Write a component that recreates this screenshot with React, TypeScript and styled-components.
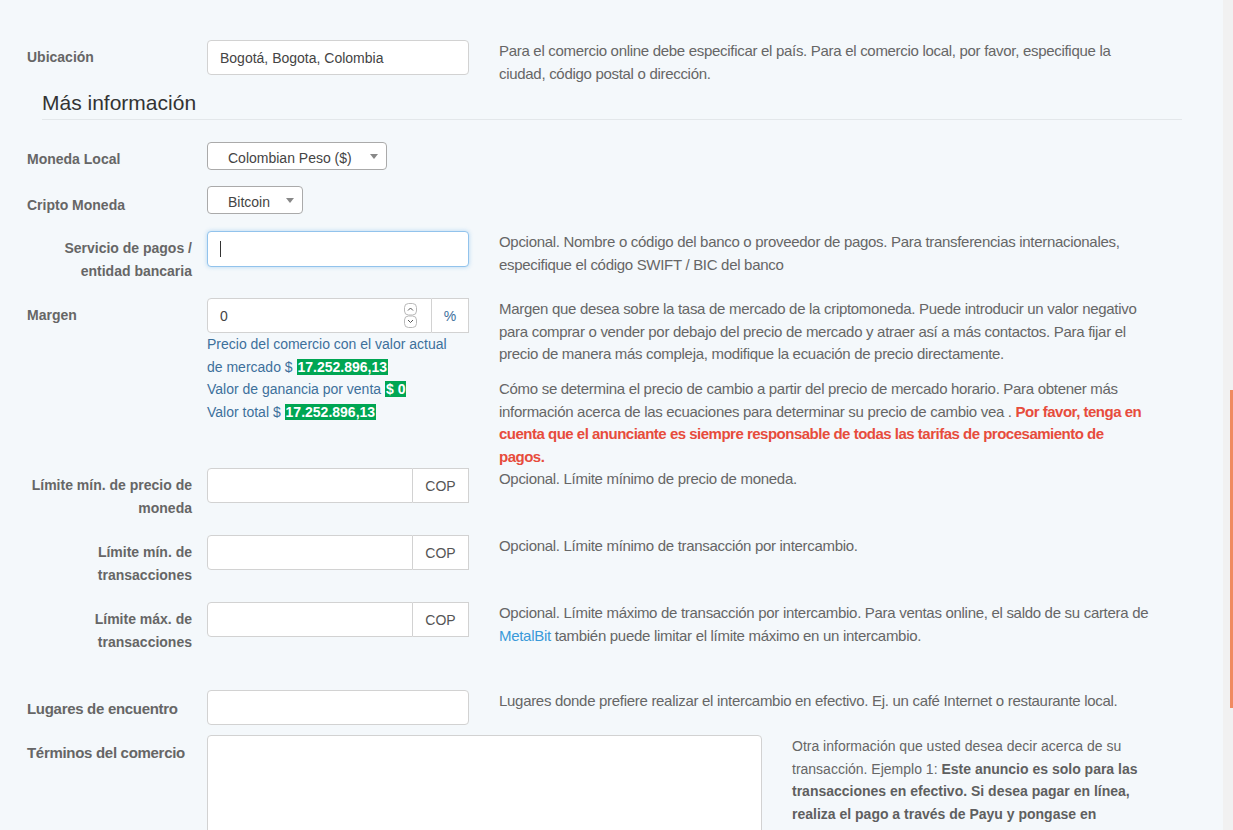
import React from "react";
import styled, { createGlobalStyle, css } from "styled-components";

const GlobalStyle = createGlobalStyle`
  html, body {
    margin: 0;
    padding: 0;
  }
  body {
    background: #f4f8fb;
    font-family: "Liberation Sans", Arial, sans-serif;
    font-size: 14px;
    color: #333;
  }
  * {
    box-sizing: border-box;
  }
`;

// the help texts are set a bit taller and tighter than the body copy
const narrow = css`
  font-size: 15px;
  letter-spacing: -0.3px;
`;

const Page = styled.div`
  display: flex;
  width: 1233px;
  height: 830px;
  overflow: hidden;
`;

const Main = styled.main`
  flex: 1;
  padding-top: 40px;
`;

const ScrollTrack = styled.div`
  width: 10px;
  background: #f1f1f1;
  display: flex;
  justify-content: flex-end;
`;

const ScrollThumb = styled.div`
  width: 3px;
  height: 318px;
  margin-top: 390px;
  background: #f08a60;
`;

const Row = styled.div<{ $mt?: number; $wide?: boolean }>`
  display: grid;
  grid-template-columns: ${(p) => (p.$wide ? "165px 555px 375px" : "165px 262px 667px")};
  column-gap: 15px;
  align-items: start;
  padding-left: 27px;
  margin-top: ${(p) => p.$mt ?? 15}px;
`;

const Label = styled.label<{ $right?: boolean; $narrow?: boolean; $pt?: number }>`
  padding-top: ${(p) => p.$pt ?? 6}px;
  font-weight: 700;
  line-height: 23px;
  color: #666;
  white-space: ${(p) => (p.$narrow ? "nowrap" : "normal")};
  text-align: ${(p) => (p.$right ? "right" : "left")};
  ${(p) => p.$narrow && narrow}
`;

const Help = styled.div<{ $narrow?: boolean }>`
  margin-left: 15px;
  color: #666;
  line-height: 22.5px;
  ${(p) => p.$narrow && narrow}

  p {
    margin: 0 0 12.5px;
  }
  p:last-child {
    margin-bottom: 0;
  }
  b {
    color: #5f5f5f;
  }
`;

const Warn = styled.b`
  color: #e74c3c !important;
  letter-spacing: -0.5px;
`;

const Link = styled.a`
  color: #3a9ad9;
  text-decoration: none;
`;

const SectionTitle = styled.h3`
  width: 1140px;
  margin: 6px 0 0 42px;
  padding-bottom: 5px;
  border-bottom: 1px solid #e3e7ea;
  font-size: 21px;
  font-weight: 400;
  line-height: 23px;
  color: #333;
`;

const TextInput = styled.input`
  display: block;
  width: 100%;
  height: 35px;
  padding: 0 12px;
  border: 1px solid #d2d2d2;
  border-radius: 4px;
  background: #fff;
  font-family: "Liberation Sans", Arial, sans-serif;
  font-size: 14px;
  color: #444;
  outline: none;
`;

const FocusField = styled.div`
  display: flex;
  align-items: center;
  height: 36px;
  padding: 0 12px;
  border: 1px solid #92c3ec;
  border-radius: 4px;
  background: #fff;
  box-shadow: 0 0 4px rgba(102, 175, 233, 0.45);
`;

const Caret = styled.span`
  width: 1px;
  height: 16px;
  background: #333;
`;

const Select = styled.div<{ $w: number }>`
  position: relative;
  width: ${(p) => p.$w}px;
  height: 28px;
  padding: 4px 0 0 20px;
  border: 1px solid #aaa;
  border-radius: 4px;
  background: #fff;
  line-height: 23px;
  color: #444;

  &::after {
    content: "";
    position: absolute;
    right: 8px;
    top: 11px;
    border-left: 4px solid transparent;
    border-right: 4px solid transparent;
    border-top: 5px solid #888;
  }
`;

const Group = styled.div`
  display: flex;
  height: 35px;
`;

const GroupField = styled.div`
  flex: 1;
  display: flex;
  align-items: center;
  padding: 0 14px 0 12px;
  border: 1px solid #d2d2d2;
  border-radius: 4px 0 0 4px;
  background: #fff;
  color: #444;
`;

const FieldValue = styled.span`
  flex: 1;
`;

const Addon = styled.div<{ $w: number; $blue?: boolean }>`
  width: ${(p) => p.$w}px;
  display: flex;
  align-items: center;
  justify-content: center;
  border: 1px solid #d2d2d2;
  border-left: none;
  background: #fff;
  color: ${(p) => (p.$blue ? "#3d6f9c" : "#555")};
`;

const Info = styled.div`
  width: 250px;
  color: #3d709b;
  line-height: 22.5px;
`;

const Badge = styled.span`
  background: #00a653;
  color: #fff;
  font-weight: 700;
  padding: 0 1px;
`;

const TextArea = styled.textarea`
  display: block;
  width: 100%;
  height: 150px;
  border: 1px solid #d2d2d2;
  border-radius: 4px;
  background: #fff;
  resize: none;
  outline: none;
`;

const Spinner = () => (
  <svg width="13" height="25" viewBox="0 0 13 25">
    <rect x="0.5" y="0.5" width="12" height="11.5" rx="4" fill="#fff" stroke="#b9b9b9" />
    <rect x="0.5" y="13" width="12" height="11.5" rx="4" fill="#fff" stroke="#b9b9b9" />
    <path d="M4 7.5 L6.5 5 L9 7.5" fill="none" stroke="#555" strokeWidth="1" />
    <path d="M4 17 L6.5 19.5 L9 17" fill="none" stroke="#555" strokeWidth="1" />
  </svg>
);

const CopGroup = () => (
  <Group>
    <GroupField />
    <Addon $w={56}>COP</Addon>
  </Group>
);

export default function App() {
  return (
    <>
      <GlobalStyle />
      <Page>
        <Main>
          <Row $mt={0}>
            <Label>Ubicación</Label>
            <TextInput defaultValue="Bogotá, Bogota, Colombia" />
            <Help $narrow>
              Para el comercio online debe especificar el país. Para el comercio local, por favor, especifique la
              ciudad, código postal o dirección.
            </Help>
          </Row>

          <SectionTitle>Más información</SectionTitle>

          <Row $mt={22}>
            <Label>Moneda Local</Label>
            <Select $w={180}>Colombian Peso ($)</Select>
          </Row>

          <Row $mt={15}>
            <Label $pt={8}>Cripto Moneda</Label>
            <Select $w={96}>Bitcoin</Select>
          </Row>

          <Row $mt={14}>
            <Label $right>Servicio de pagos / entidad bancaria</Label>
            <FocusField>
              <Caret />
            </FocusField>
            <Help $narrow>
              Opcional. Nombre o código del banco o proveedor de pagos. Para transferencias internacionales,
              especifique el código SWIFT / BIC del banco
            </Help>
          </Row>

          <Row $mt={15}>
            <Label>Margen</Label>
            <div>
              <Group>
                <GroupField>
                  <FieldValue>0</FieldValue>
                  <Spinner />
                </GroupField>
                <Addon $w={37} $blue>%</Addon>
              </Group>
              <Info>
                Precio del comercio con el valor actual de mercado $ <Badge>17.252.896,13</Badge>
                <br />
                Valor de ganancia por venta <Badge>$ 0</Badge>
                <br />
                Valor total $ <Badge>17.252.896,13</Badge>
              </Info>
            </div>
            <Help $narrow>
              <p>
                Margen que desea sobre la tasa de mercado de la criptomoneda. Puede introducir un valor negativo
                para comprar o vender por debajo del precio de mercado y atraer así a más contactos. Para fijar el
                precio de manera más compleja, modifique la ecuación de precio directamente.
              </p>
              <p>
                Cómo se determina el precio de cambio a partir del precio de mercado horario. Para obtener más
                información acerca de las ecuaciones para determinar su precio de cambio vea .{" "}
                <Warn>
                  Por favor, tenga en cuenta que el anunciante es siempre responsable de todas las tarifas de
                  procesamiento de pagos.
                </Warn>
              </p>
            </Help>
          </Row>

          <Row $mt={0}>
            <Label $right>Límite mín. de precio de moneda</Label>
            <CopGroup />
            <Help $narrow>Opcional. Límite mínimo de precio de moneda.</Help>
          </Row>

          <Row $mt={15}>
            <Label $right>Límite mín. de transacciones</Label>
            <CopGroup />
            <Help $narrow>Opcional. Límite mínimo de transacción por intercambio.</Help>
          </Row>

          <Row $mt={15}>
            <Label $right>Límite máx. de transacciones</Label>
            <CopGroup />
            <Help $narrow>
              Opcional. Límite máximo de transacción por intercambio. Para ventas online, el saldo de su cartera de{" "}
              <Link href="#">MetalBit</Link> también puede limitar el límite máximo en un intercambio.
            </Help>
          </Row>

          <Row $mt={36}>
            <Label $narrow $pt={7}>Lugares de encuentro</Label>
            <TextInput />
            <Help $narrow>
              Lugares donde prefiere realizar el intercambio en efectivo. Ej. un café Internet o restaurante local.
            </Help>
          </Row>

          <Row $mt={10} $wide>
            <Label $narrow>Términos del comercio</Label>
            <TextArea />
            <Help>
              Otra información que usted desea decir acerca de su transacción. Ejemplo 1:{" "}
              <b>
                Este anuncio es solo para las transacciones en efectivo. Si desea pagar en línea, realiza el pago a
                través de Payu y pongase en contacto conmigo.
              </b>
            </Help>
          </Row>
        </Main>
        <ScrollTrack>
          <ScrollThumb />
        </ScrollTrack>
      </Page>
    </>
  );
}
